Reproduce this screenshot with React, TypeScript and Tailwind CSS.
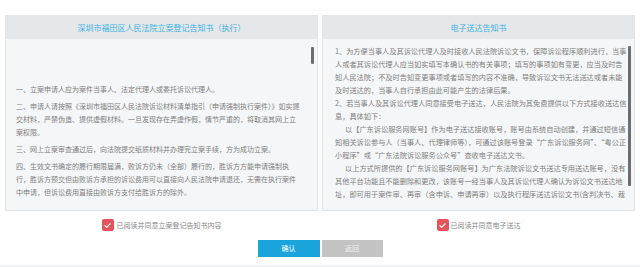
import React from "react";

const font = { fontFamily: '"Noto Sans CJK SC", "Noto Sans", sans-serif' };

function Check() {
  return (
    <span className="flex h-[12px] w-[12px] shrink-0 items-center justify-center rounded-[2px] bg-[#e8525b]">
      <svg viewBox="0 0 12 12" className="h-[9px] w-[9px]">
        <path d="M2.5 6.2l2.4 2.3 4.6-4.8" fill="none" stroke="#fff" strokeWidth="1.6" strokeLinecap="round" strokeLinejoin="round" />
      </svg>
    </span>
  );
}

function Panel({ title, thumb, children }: { title: string; thumb: string; children: React.ReactNode }) {
  return (
    <div className="border border-[#e3e6e9]">
      <div className="flex h-[23px] items-center justify-center bg-[#e4e8eb] text-[8px] text-[#3fb1e0]">{title}</div>
      <div className="relative h-[171px] bg-[#f5f6f7] pb-[8px] pt-[6px]">
        <div className="h-full overflow-hidden">{children}</div>
        {/* scrollbar thumb */}
        <div className={"absolute right-[3px] w-[3px] rounded-[1px] bg-[#6e6e6e] " + thumb} />
      </div>
    </div>
  );
}

export default function App() {
  return (
    <div className="w-[640px] h-[267px] bg-white overflow-hidden" style={font}>
      <div className="pt-[15px] px-[5px]">
        <div className="grid grid-cols-2 gap-[4px]">
          <div>
            <Panel title="深圳市福田区人民法院立案登记告知书（执行）" thumb="top-[8px] h-[17px]">
              <div className="pl-[10px] pt-[38px] w-[294px] text-[7px] leading-[13px] text-[#808080]">
                <p className="mb-[4px]">一、立案申请人应为案件当事人、法定代理人或委托诉讼代理人。</p>
                <p className="mb-[4px]">二、申请人请按照《深圳市福田区人民法院诉讼材料清单指引（申请强制执行案件）》如实提交材料，严禁伪造、提供虚假材料。一旦发现存在弄虚作假，情节严重的，将取消其网上立案权限。</p>
                <p className="mb-[4px]">三、网上立案审查通过后，向法院提交纸质材料并办理完立案手续，方为成功立案。</p>
                <p className="mb-[4px]">四、生效文书确定的履行期限届满，败诉方仍未（全部）履行的，胜诉方方能申请强制执行，胜诉方预交但由败诉方承担的诉讼费用可以直接向人民法院申请退还，无需在执行案件中申请，但诉讼费用直接由败诉方支付给胜诉方的除外。</p>
              </div>
            </Panel>
            <div className="mt-[8px] flex h-[12px] items-center justify-center gap-[3px] text-[7px] leading-[12px] text-[#8a8a8a]">
              <Check />
              <span>已阅读并同意立案登记告知书内容</span>
            </div>
          </div>
          <div>
            <Panel title="电子送达告知书" thumb="top-[7px] h-[140px]">
              <div className="pl-[12px] w-[306px] text-[7.2px] leading-[13px] text-[#808080]">
                <p>1、为方便当事人及其诉讼代理人及时接收人民法院诉讼文书，保障诉讼程序顺利进行，当事人或者其诉讼代理人应当如实填写本确认书的有关事项；填写的事项如有变更，应当及时告知人民法院；不及时告知变更事项或者填写的内容不准确，导致诉讼文书无法送达或者未能及时送达的，当事人自行承担由此可能产生的法律后果。</p>
                <p>2、若当事人及其诉讼代理人同意接受电子送达，人民法院为其免费提供以下方式接收送达信息，具体如下：</p>
                <p className="indent-[10px]">以【广东诉讼服务网账号】作为电子送达接收账号，账号由系统自动创建，并通过短信通知相关诉讼参与人（当事人、代理律师等），可通过该账号登录“广东诉讼服务网”、“粤公正小程序”或“广东法院诉讼服务公众号”查收电子送达文书。</p>
                <p className="indent-[10px]">以上方式所提供的【广东诉讼服务网账号】为广东法院诉讼文书送达专用送达账号，没有其他平台功能且不能删除和更改，该账号一经当事人及其诉讼代理人确认为诉讼文书送达地址，即可用于案件审、再审（含申诉、申请再审）以及执行程序送达诉讼文书(含判决书、裁定书等）。</p>
              </div>
            </Panel>
            <div className="mt-[8px] flex h-[12px] items-center justify-center gap-[2px] text-[7px] leading-[12px] text-[#8a8a8a]">
              <Check />
              <span className="whitespace-nowrap">已阅读并同意电子送达</span>
            </div>
          </div>
        </div>
        <div className="mt-[9px] flex justify-center gap-[2px] text-[7px]">
          <button className="h-[17px] w-[62px] bg-[#1ba4dc] text-white">确认</button>
          <button className="h-[17px] w-[61px] bg-[#c4c4c4] text-[#f0f0f0]">返回</button>
        </div>
      </div>
      <div className="mt-[8px] h-[10px] bg-[#f2f3f4]" />
    </div>
  );
}
